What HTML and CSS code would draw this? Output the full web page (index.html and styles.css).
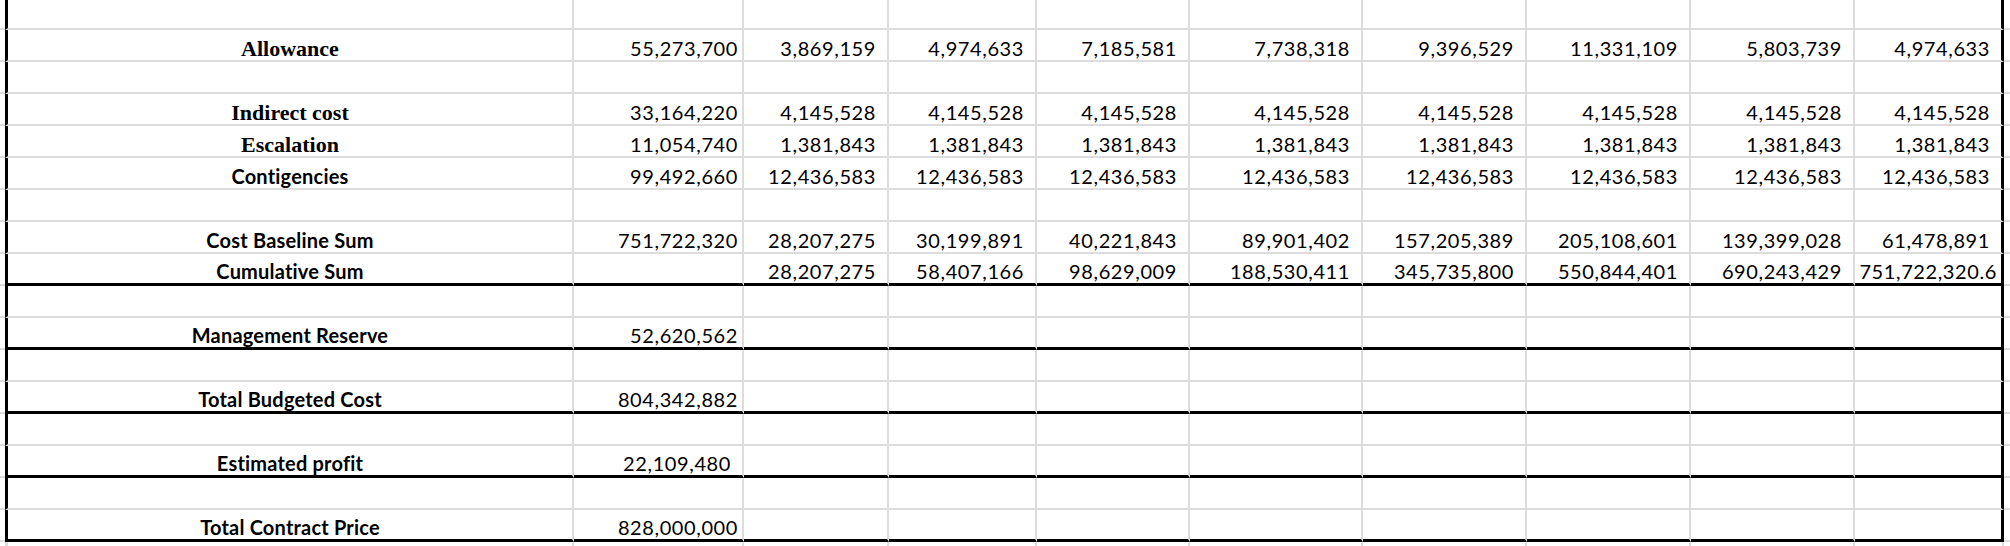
FILE: index.html
```html
<!DOCTYPE html>
<html>
<head>
<meta charset="utf-8">
<title>Cost Baseline</title>
<link rel="stylesheet" href="styles.css">
</head>
<body>
<div class="sheet">
  <div class="row top">
    <div class="c edge"></div><div class="c lab"></div><div class="c"></div><div class="c"></div><div class="c"></div><div class="c"></div><div class="c"></div><div class="c"></div><div class="c"></div><div class="c"></div><div class="c last"></div><div class="c edge"></div>
  </div>
  <div class="row">
    <div class="c edge"></div>
    <div class="c lab serif">Allowance</div>
    <div class="c colb">55,273,700</div>
    <div class="c">3,869,159</div>
    <div class="c">4,974,633</div>
    <div class="c">7,185,581</div>
    <div class="c">7,738,318</div>
    <div class="c">9,396,529</div>
    <div class="c">11,331,109</div>
    <div class="c">5,803,739</div>
    <div class="c last">4,974,633</div>
    <div class="c edge"></div>
  </div>
  <div class="row">
    <div class="c edge"></div><div class="c lab"></div><div class="c"></div><div class="c"></div><div class="c"></div><div class="c"></div><div class="c"></div><div class="c"></div><div class="c"></div><div class="c"></div><div class="c last"></div><div class="c edge"></div>
  </div>
  <div class="row">
    <div class="c edge"></div>
    <div class="c lab serif">Indirect cost</div>
    <div class="c colb">33,164,220</div>
    <div class="c">4,145,528</div>
    <div class="c">4,145,528</div>
    <div class="c">4,145,528</div>
    <div class="c">4,145,528</div>
    <div class="c">4,145,528</div>
    <div class="c">4,145,528</div>
    <div class="c">4,145,528</div>
    <div class="c last">4,145,528</div>
    <div class="c edge"></div>
  </div>
  <div class="row">
    <div class="c edge"></div>
    <div class="c lab serif">Escalation</div>
    <div class="c colb">11,054,740</div>
    <div class="c">1,381,843</div>
    <div class="c">1,381,843</div>
    <div class="c">1,381,843</div>
    <div class="c">1,381,843</div>
    <div class="c">1,381,843</div>
    <div class="c">1,381,843</div>
    <div class="c">1,381,843</div>
    <div class="c last">1,381,843</div>
    <div class="c edge"></div>
  </div>
  <div class="row">
    <div class="c edge"></div>
    <div class="c lab">Contigencies</div>
    <div class="c colb">99,492,660</div>
    <div class="c">12,436,583</div>
    <div class="c">12,436,583</div>
    <div class="c">12,436,583</div>
    <div class="c">12,436,583</div>
    <div class="c">12,436,583</div>
    <div class="c">12,436,583</div>
    <div class="c">12,436,583</div>
    <div class="c last">12,436,583</div>
    <div class="c edge"></div>
  </div>
  <div class="row">
    <div class="c edge"></div><div class="c lab"></div><div class="c"></div><div class="c"></div><div class="c"></div><div class="c"></div><div class="c"></div><div class="c"></div><div class="c"></div><div class="c"></div><div class="c last"></div><div class="c edge"></div>
  </div>
  <div class="row">
    <div class="c edge"></div>
    <div class="c lab">Cost Baseline Sum</div>
    <div class="c colb">751,722,320</div>
    <div class="c">28,207,275</div>
    <div class="c">30,199,891</div>
    <div class="c">40,221,843</div>
    <div class="c">89,901,402</div>
    <div class="c">157,205,389</div>
    <div class="c">205,108,601</div>
    <div class="c">139,399,028</div>
    <div class="c last">61,478,891</div>
    <div class="c edge"></div>
  </div>
  <div class="row thick">
    <div class="c edge"></div>
    <div class="c lab">Cumulative Sum</div>
    <div class="c colb"></div>
    <div class="c">28,207,275</div>
    <div class="c">58,407,166</div>
    <div class="c">98,629,009</div>
    <div class="c">188,530,411</div>
    <div class="c">345,735,800</div>
    <div class="c">550,844,401</div>
    <div class="c">690,243,429</div>
    <div class="c last tight">751,722,320.6</div>
    <div class="c edge"></div>
  </div>
  <div class="row">
    <div class="c edge"></div><div class="c lab"></div><div class="c"></div><div class="c"></div><div class="c"></div><div class="c"></div><div class="c"></div><div class="c"></div><div class="c"></div><div class="c"></div><div class="c last"></div><div class="c edge"></div>
  </div>
  <div class="row thick">
    <div class="c edge"></div>
    <div class="c lab">Management Reserve</div>
    <div class="c colb">52,620,562</div>
    <div class="c"></div><div class="c"></div><div class="c"></div><div class="c"></div><div class="c"></div><div class="c"></div><div class="c"></div><div class="c last"></div>
    <div class="c edge"></div>
  </div>
  <div class="row">
    <div class="c edge"></div><div class="c lab"></div><div class="c"></div><div class="c"></div><div class="c"></div><div class="c"></div><div class="c"></div><div class="c"></div><div class="c"></div><div class="c"></div><div class="c last"></div><div class="c edge"></div>
  </div>
  <div class="row thick">
    <div class="c edge"></div>
    <div class="c lab">Total Budgeted Cost</div>
    <div class="c colb">804,342,882</div>
    <div class="c"></div><div class="c"></div><div class="c"></div><div class="c"></div><div class="c"></div><div class="c"></div><div class="c"></div><div class="c last"></div>
    <div class="c edge"></div>
  </div>
  <div class="row">
    <div class="c edge"></div><div class="c lab"></div><div class="c"></div><div class="c"></div><div class="c"></div><div class="c"></div><div class="c"></div><div class="c"></div><div class="c"></div><div class="c"></div><div class="c last"></div><div class="c edge"></div>
  </div>
  <div class="row thick">
    <div class="c edge"></div>
    <div class="c lab">Estimated profit</div>
    <div class="c">22,109,480</div>
    <div class="c"></div><div class="c"></div><div class="c"></div><div class="c"></div><div class="c"></div><div class="c"></div><div class="c"></div><div class="c last"></div>
    <div class="c edge"></div>
  </div>
  <div class="row">
    <div class="c edge"></div><div class="c lab"></div><div class="c"></div><div class="c"></div><div class="c"></div><div class="c"></div><div class="c"></div><div class="c"></div><div class="c"></div><div class="c"></div><div class="c last"></div><div class="c edge"></div>
  </div>
  <div class="row thick">
    <div class="c edge"></div>
    <div class="c lab">Total Contract Price</div>
    <div class="c colb">828,000,000</div>
    <div class="c"></div><div class="c"></div><div class="c"></div><div class="c"></div><div class="c"></div><div class="c"></div><div class="c"></div><div class="c last"></div>
    <div class="c edge"></div>
  </div>
  <div class="row tail">
    <div class="c edge"></div><div class="c lab"></div><div class="c"></div><div class="c"></div><div class="c"></div><div class="c"></div><div class="c"></div><div class="c"></div><div class="c"></div><div class="c"></div><div class="c last"></div><div class="c edge"></div>
  </div>
</div>
</body>
</html>
```
FILE: styles.css
```css
html, body {
  margin: 0;
  padding: 0;
  background: #ffffff;
  overflow: hidden;
}

.sheet {
  width: 2010px;
}

.row {
  display: grid;
  grid-template-columns: 5px 569px 170px 145px 148px 153px 173px 164px 164px 164px 149px 6px;
  height: 32px;
}

.row.top {
  height: 30px;
}

.row.tail {
  height: 4px;
}

.c {
  box-sizing: border-box;
  border-right: 2px solid #dcdcdc;
  border-bottom: 2px solid #dcdcdc;
  display: flex;
  align-items: flex-end;
  justify-content: flex-end;
  padding: 0 11px 2px 0;
  font-family: Lato, "Open Sans", sans-serif;
  font-size: 20px;
  font-weight: 400;
  line-height: 1;
  letter-spacing: 0.6px;
  color: #000000;
  white-space: nowrap;
  min-width: 0;
}

.c.edge {
  border-right: none;
  padding: 0;
}

.c.lab {
  border-left: 3px solid #000000;
  justify-content: center;
  font-weight: 700;
  letter-spacing: 0.2px;
  padding: 0 0 2px 0;
}

.c.serif {
  font-family: "Liberation Serif", "Times New Roman", serif;
  font-size: 22px;
  letter-spacing: 0;
  padding-bottom: 0;
}

.c.colb {
  padding-right: 4px;
}

.c.tight {
  padding-right: 4px;
}

.c.last {
  border-right: 3px solid #000000;
}

.thick > .c:not(.edge) {
  border-bottom: 3px solid #000000;
}

.tail > .c {
  border-bottom: none;
}

.tail > .c.lab {
  border-left-color: #dcdcdc;
}

.tail > .c.last {
  border-right: 2px solid #dcdcdc;
}
```
